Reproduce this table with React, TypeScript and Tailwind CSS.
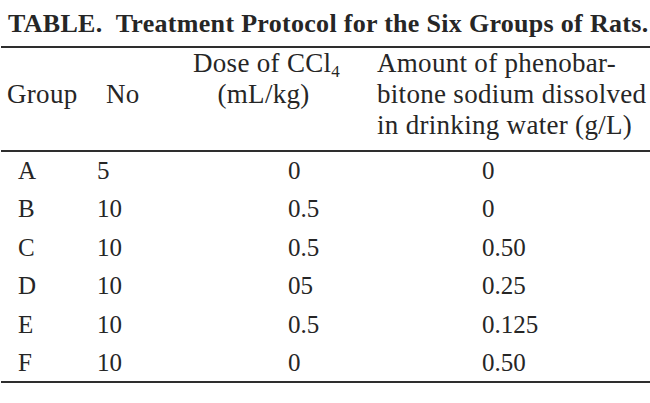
import React from "react";

const rows = [
  ["A", "5", "0", "0"],
  ["B", "10", "0.5", "0"],
  ["C", "10", "0.5", "0.50"],
  ["D", "10", "05", "0.25"],
  ["E", "10", "0.5", "0.125"],
  ["F", "10", "0", "0.50"],
];

export default function App() {
  return (
    <div
      className="w-[650px] h-[403px] bg-white text-[#262626] overflow-hidden"
      style={{ fontFamily: '"Liberation Serif", "Times New Roman", serif' }}
    >
      <div className="pt-[7px] pl-[8px] text-[26px] leading-[34px] font-bold tracking-[0.3px] whitespace-pre">
        TABLE.  Treatment Protocol for the Six Groups of Rats.
      </div>
      <div className="mt-[5px] ml-[1px] h-[2px] bg-[#2e2e2e]" />
      <div className="grid grid-cols-[90px_95px_185px_280px] text-[27px] leading-[31px] tracking-[0.3px] pb-[9px]">
        <div className="pl-[7px] pt-[31px]">Group</div>
        <div className="pl-[16px] pt-[31px]">No</div>
        <div className="pl-[8px]">
          <div className="inline-flex flex-col items-center">
            <span>
              Dose of CCl<span className="text-[17px] leading-[0] relative top-[5px]">4</span>
            </span>
            <span className="pr-[6px]">(mL/kg)</span>
          </div>
        </div>
        <div className="pl-[7px] flex flex-col whitespace-nowrap">
          <span>Amount of phenobar-</span>
          <span>bitone sodium dissolved</span>
          <span>in drinking water (g/L)</span>
        </div>
      </div>
      <div className="ml-[1px] h-[2px] bg-[#2e2e2e]" />
      <div className="text-[25px] leading-[38.4px]">
        {rows.map((r) => (
          <div key={r[0]} className="grid grid-cols-[90px_95px_185px_280px] h-[38.4px]">
            <div className="pl-[18px]">{r[0]}</div>
            <div className="pl-[7px]">{r[1]}</div>
            <div className="pl-[103px]">{r[2]}</div>
            <div className="pl-[112px]">{r[3]}</div>
          </div>
        ))}
      </div>
      <div className="-mt-[1px] ml-[1px] h-[2px] bg-[#2e2e2e]" />
    </div>
  );
}
